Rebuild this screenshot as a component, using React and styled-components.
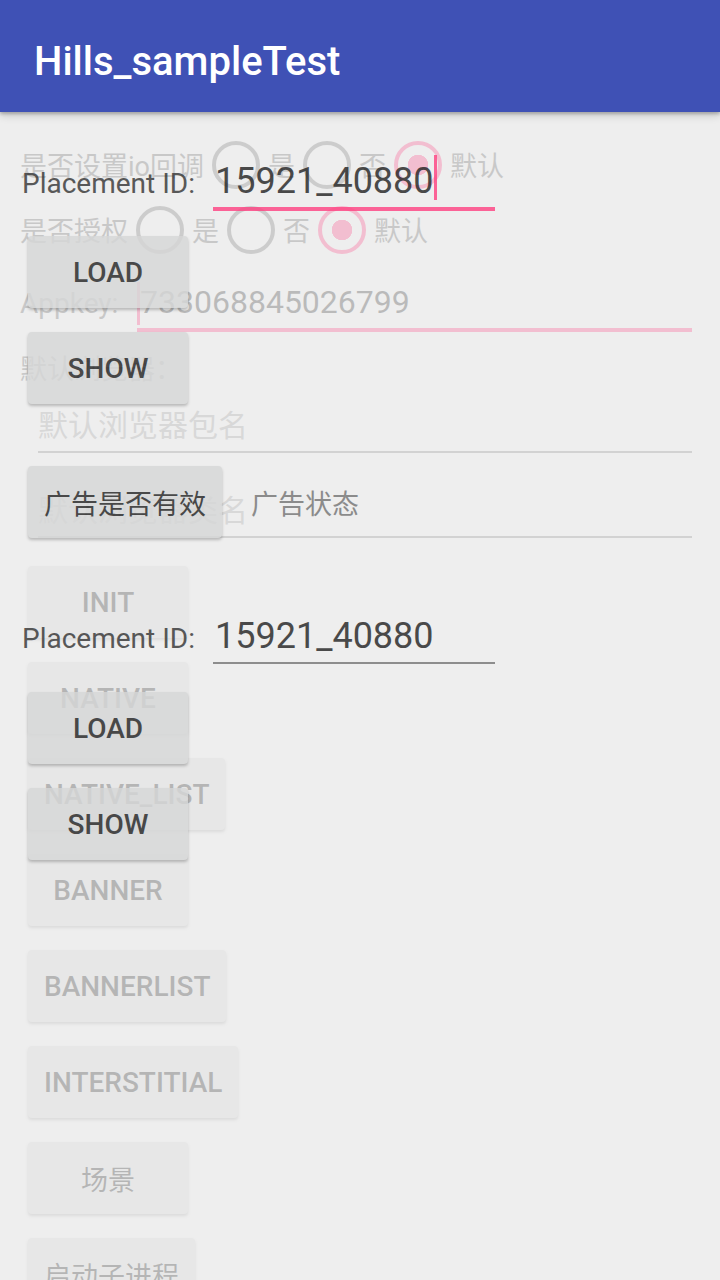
import React from 'react';
import styled, { createGlobalStyle } from 'styled-components';

const pink = '#ff4081';

const GlobalStyle = createGlobalStyle`
  * { box-sizing: border-box; }
  html, body { margin: 0; padding: 0; background: #eeeeee; }
  body {
    font-family: Roboto, "Noto Sans CJK SC", sans-serif;
    -webkit-font-smoothing: antialiased;
  }
`;

const Screen = styled.div`
  width: 720px;
  height: 1280px;
  overflow: hidden;
  background: #eeeeee;
  display: flex;
  flex-direction: column;
`;

const AppBar = styled.header`
  position: relative;
  z-index: 2;
  flex: 0 0 112px;
  display: flex;
  align-items: center;
  padding: 12px 0 0 34px;
  background: #3f51b5;
  box-shadow: 0 2px 3px rgba(0, 0, 0, 0.22), 0 4px 8px rgba(0, 0, 0, 0.14);
`;

const Title = styled.h1`
  margin: 0;
  color: #ffffff;
  font-size: 40px;
  font-weight: 500;
  line-height: 1;
`;

const Stage = styled.main`
  position: relative;
  flex: 1;
`;

// the activity underneath, fading out
const MainLayer = styled.section`
  opacity: 0.27;
  display: flex;
  flex-direction: column;
  padding: 20px 0 0 20px;
`;

// the activity on top, fading in
const AdLayer = styled.section`
  position: absolute;
  inset: 0;
  opacity: 0.8;
  display: flex;
  flex-direction: column;
  padding: 47px 0 0 20px;
`;

const RadioRow = styled.div`
  display: flex;
  align-items: center;
  height: 65px;
  font-size: 27px;
  color: #666666;
`;

const Radio = styled.span`
  flex: 0 0 64px;
  height: 64px;
  display: flex;
  align-items: center;
  justify-content: center;

  &::before {
    content: '';
    width: 40px;
    height: 40px;
    border-radius: 50%;
    border: 4px solid ${p => (p.$checked ? pink : '#757575')};
    background: ${p =>
      p.$checked ? `radial-gradient(circle, ${pink} 0 10px, transparent 10.5px)` : 'none'};
  }
`;

const AppkeyRow = styled.div`
  display: flex;
  align-items: baseline;
  margin-top: 20px;
  margin-right: 28px;
`;

const Label = styled.span`
  flex: 0 0 ${p => p.$width}px;
  padding-left: ${p => p.$indent || 0}px;
  font-size: 28px;
  line-height: 40px;
  color: ${p => p.$color || '#666666'};
  white-space: nowrap;
`;

const AppkeyInput = styled.div`
  flex: 1;
  font-size: 32px;
  line-height: 40px;
  padding-bottom: 3px;
  color: #333333;
  white-space: nowrap;
  border-bottom: 4px solid ${pink};
`;

const Cursor = styled.span`
  display: inline-block;
  width: 3px;
  height: ${p => p.$height}px;
  vertical-align: ${p => p.$drop}px;
  margin-top: ${p => p.$lift || 0}px;
  background: ${pink};
`;

const SectionLabel = styled.div`
  margin-top: 18px;
  font-size: 27px;
  line-height: 40px;
  color: #666666;
`;

const HintInput = styled.div`
  margin: ${p => p.$top}px 28px 0 18px;
  font-size: 30px;
  line-height: 40px;
  padding-bottom: 5px;
  color: #9e9e9e;
  border-bottom: 2px solid #8a8a8a;
`;

const ButtonStack = styled.div`
  display: flex;
  flex-direction: column;
  align-items: flex-start;
  margin-top: ${p => p.$top}px;
`;

const Button = styled.button`
  height: 72px;
  min-width: 160px;
  margin: 12px 0 12px 8px;
  padding: 0 16px;
  display: flex;
  align-items: center;
  justify-content: center;
  border: none;
  border-radius: 4px;
  background: #d6d7d7;
  box-shadow: 0 2px 3px rgba(0, 0, 0, 0.28);
  font-family: inherit;
  font-size: ${p => (p.$cjk ? 27 : 28)}px;
  font-weight: ${p => (p.$cjk ? 400 : 500)};
  text-transform: uppercase;
  color: #212121;
  white-space: nowrap;
`;

const IdRow = styled.div`
  display: flex;
  align-items: baseline;
  margin-top: ${p => p.$top}px;
`;

const IdInput = styled.div`
  flex: 0 0 282px;
  font-size: 36px;
  line-height: 44px;
  padding: 0 0 4px 2px;
  color: #212121;
  white-space: nowrap;
  border-bottom: ${p => (p.$focused ? `4px solid ${pink}` : '2px solid #757575')};
`;

const ValidRow = styled.div`
  display: flex;
  align-items: center;
  margin-top: 38px;
`;

const Status = styled.span`
  margin-left: 29px;
  font-size: 27px;
  color: #737373;
`;

const RadioGroup = ({ label, value }) => (
  <RadioRow>
    <span>{label}</span>
    {['是', '否', '默认'].map(opt => (
      <React.Fragment key={opt}>
        <Radio $checked={opt === value} />
        <span>{opt}</span>
      </React.Fragment>
    ))}
  </RadioRow>
);

const mainButtons = [
  'INIT',
  'NATIVE',
  'NATIVE_LIST',
  'BANNER',
  'BANNERLIST',
  'INTERSTITIAL',
  '场景',
  '启动子进程'
];

const isCjk = s => /[\u4e00-\u9fff]/.test(s);

const PlacementRow = ({ top, focused }) => (
  <IdRow $top={top}>
    <Label $width={193} $indent={2} $color="#333333">
      Placement ID:
    </Label>
    <IdInput $focused={focused}>
      15921_40880
      {focused && <Cursor $height={45} $drop={-7} $lift={-4} />}
    </IdInput>
  </IdRow>
);

export default function App() {
  return (
    <Screen>
      <GlobalStyle />
      <AppBar>
        <Title>Hills_sampleTest</Title>
      </AppBar>
      <Stage>
        <MainLayer>
          <RadioGroup label="是否设置io回调" value="默认" />
          <RadioGroup label="是否授权" value="默认" />
          <AppkeyRow>
            <Label $width={117}>Appkey:</Label>
            <AppkeyInput>
              <Cursor $height={43} $drop={-12} />
              733068845026799
            </AppkeyInput>
          </AppkeyRow>
          <SectionLabel>默认浏览器：</SectionLabel>
          <HintInput $top={16}>默认浏览器包名</HintInput>
          <HintInput $top={38}>默认浏览器类名</HintInput>
          <ButtonStack $top={16}>
            {mainButtons.map(name => (
              <Button key={name} $cjk={isCjk(name)}>
                {name}
              </Button>
            ))}
          </ButtonStack>
        </MainLayer>

        <AdLayer>
          <PlacementRow top={0} focused />
          <ButtonStack $top={13}>
            <Button>Load</Button>
            <Button>Show</Button>
          </ButtonStack>
          <ValidRow>
            <Button $cjk>广告是否有效</Button>
            <Status>广告状态</Status>
          </ValidRow>
          <PlacementRow top={64} />
          <ButtonStack $top={16}>
            <Button>Load</Button>
            <Button>Show</Button>
          </ButtonStack>
        </AdLayer>
      </Stage>
    </Screen>
  );
}
